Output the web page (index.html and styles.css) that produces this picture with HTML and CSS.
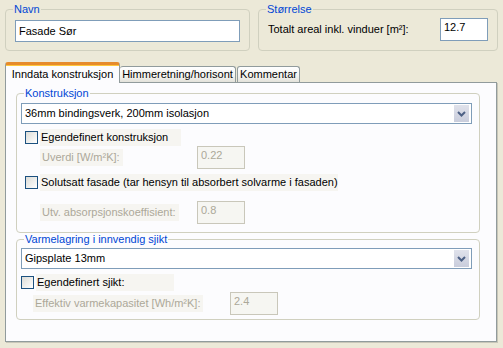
FILE: index.html
```html
<!DOCTYPE html>
<html>
<head>
<meta charset="utf-8">
<link rel="stylesheet" href="styles.css">
</head>
<body>
<div class="top">
  <fieldset class="grp navn">
    <legend>Navn</legend>
    <div class="input name">Fasade Sør</div>
  </fieldset>
  <fieldset class="grp size">
    <legend>Størrelse</legend>
    <div class="sizerow">
      <span class="lbl">Totalt areal inkl. vinduer [m²]:</span>
      <div class="input num">12.7</div>
    </div>
  </fieldset>
</div>
<div class="tabs">
  <div class="tab active">Inndata konstruksjon</div>
  <div class="tab t2">Himmeretning/horisont</div>
  <div class="tab t3">Kommentar</div>
</div>
<div class="panel">
  <fieldset class="grp inner konst">
    <legend>Konstruksjon</legend>
    <div class="combo"><span class="ctext">36mm bindingsverk, 200mm isolasjon</span><span class="arrow"><svg width="9" height="6" viewBox="0 0 9 6"><path d="M1 1 L4.5 4.5 L8 1" fill="none" stroke="#4D6185" stroke-width="2"/></svg></span></div>
    <div class="chkrow r1"><span class="chk"></span><span class="clbl w1">Egendefinert konstruksjon</span></div>
    <div class="subrow s1"><div class="lcell"><span class="dlbl">Uverdi [W/m²K]:</span></div><div class="input dis">0.22</div></div>
    <div class="chkrow r2"><span class="chk"></span><span class="clbl">Solutsatt fasade (tar hensyn til absorbert solvarme i fasaden)</span></div>
    <div class="subrow s2"><div class="lcell"><span class="dlbl">Utv. absorpsjonskoeffisient:</span></div><div class="input dis">0.8</div></div>
  </fieldset>
  <fieldset class="grp inner varme">
    <legend>Varmelagring i innvendig sjikt</legend>
    <div class="combo c2"><span class="ctext">Gipsplate 13mm</span><span class="arrow"><svg width="9" height="6" viewBox="0 0 9 6"><path d="M1 1 L4.5 4.5 L8 1" fill="none" stroke="#4D6185" stroke-width="2"/></svg></span></div>
    <div class="chkrow r3"><span class="chk"></span><span class="clbl w3">Egendefinert sjikt:</span></div>
    <div class="subrow s3"><div class="lcell l3"><span class="dlbl">Effektiv varmekapasitet [Wh/m²K]:</span></div><div class="input dis">2.4</div></div>
  </fieldset>
</div>
</body>
</html>
```

FILE: styles.css
```css
* { box-sizing: border-box; }
html, body { margin: 0; padding: 0; }
body {
  width: 503px;
  height: 348px;
  overflow: hidden;
  background: #ECE9D8;
  font: 11px/13px "Liberation Sans", Arial, sans-serif;
  color: #000;
}
.top {
  display: flex;
  gap: 8px;
  padding: 3px 0 0 5px;
}
fieldset.grp {
  margin: 0;
  padding: 0;
  border: 1px solid #D0D0BF;
  border-radius: 4px;
  min-width: 0;
}
legend {
  color: #0046D5;
  padding: 0 1px;
  margin-left: 7px;
  line-height: 13px;
}
.navn { width: 245px; height: 48px; }
.size { width: 240px; height: 48px; }
.input {
  border: 1px solid #7F9DB9;
  background: #fff;
  padding-left: 3px;
  line-height: 19px;
  white-space: nowrap;
}
.input.name {
  margin: 4px 0 0 9px;
  width: 225px;
  height: 22px;
  line-height: 20px;
}
.sizerow {
  display: flex;
  align-items: center;
  margin-top: 2px;
  padding-left: 9px;
}
.sizerow .lbl { width: 172px; }
.input.num {
  width: 48px;
  height: 23px;
  line-height: 17px;
}
.tabs {
  display: flex;
  align-items: flex-end;
  margin-top: 10px;
  padding-left: 5px;
  height: 21px;
  position: relative;
  z-index: 2;
}
.tab {
  border: 1px solid #919B9C;
  border-bottom: none;
  border-radius: 3px 3px 0 0;
  white-space: nowrap;
  text-align: center;
}
.tab.active {
  width: 115px;
  height: 21px;
  margin-bottom: -1px;
  background: #FCFCFE;
  border-top: 3px solid #E68B2C;
  box-shadow: inset 0 1px 0 #FFC83C;
  padding-top: 2px;
  line-height: 14px;
  position: relative;
}
.tab.t2, .tab.t3 {
  height: 16px;
  background: linear-gradient(#FFFFFF, #F3F3EF 60%, #E3E2DA);
  line-height: 14px;
  border-left: none;
}
.tab.t2 { width: 116px; }
.tab.t3 { width: 63px; margin-left: 1px; border-left: 1px solid #919B9C; }
.panel {
  margin-left: 5px;
  width: 492px;
  height: 260px;
  border: 1px solid #919B9C;
  background: #FCFCFE;
  box-shadow: 1px 1px 0 #C8C6B8;
  padding: 4px 0 0 10px;
  position: relative;
  z-index: 1;
}
fieldset.inner { width: 464px; }
.konst { height: 146px; }
.varme { height: 87px; margin-top: 9px; }
.combo {
  display: flex;
  align-items: center;
  justify-content: space-between;
  margin: 3px 0 0 4px;
  width: 451px;
  height: 21px;
  border: 1px solid #7F9DB9;
  background: #fff;
  padding: 0 1px 0 3px;
}
.combo.c2 { margin-top: 2px; }
.arrow {
  width: 17px;
  height: 19px;
  background: linear-gradient(#E0E2EB, #C9CDDC);
  border: 1px solid #fff;
  display: flex;
  align-items: center;
  justify-content: center;
}
.chkrow {
  display: flex;
  align-items: center;
  height: 17px;
}
.r1 { margin: 5px 0 0 8px; }
.r2 { margin: 5px 0 0 8px; }
.r3 { margin: 5px 0 0 4px; }
.chk {
  width: 13px;
  height: 13px;
  border: 1px solid #1C5180;
  background: linear-gradient(135deg, #DCDCD7, #FFFFFF);
  flex: none;
}
.clbl {
  margin-left: 2px;
  padding-left: 1px;
  line-height: 17px;
  background: #F6F5F1;
}
.clbl.w1 { width: 141px; }
.clbl.w3 { width: 138px; }
.subrow {
  display: flex;
  align-items: center;
  height: 23px;
}
.s1 { margin: 0 0 0 23px; }
.s2 { margin: 10px 0 0 23px; }
.s3 { margin: 1px 0 0 16px; }
.lcell { width: 157px; }
.lcell.l3 { width: 197px; }
.dlbl {
  display: inline-block;
  color: #ACA899;
  background: #F6F5F1;
  padding: 2px 3px 2px 2px;
}
.input.dis {
  width: 48px;
  height: 23px;
  border-color: #C9C7BA;
  background: #F6F6F2;
  color: #ACA899;
  line-height: 17px;
}
```
